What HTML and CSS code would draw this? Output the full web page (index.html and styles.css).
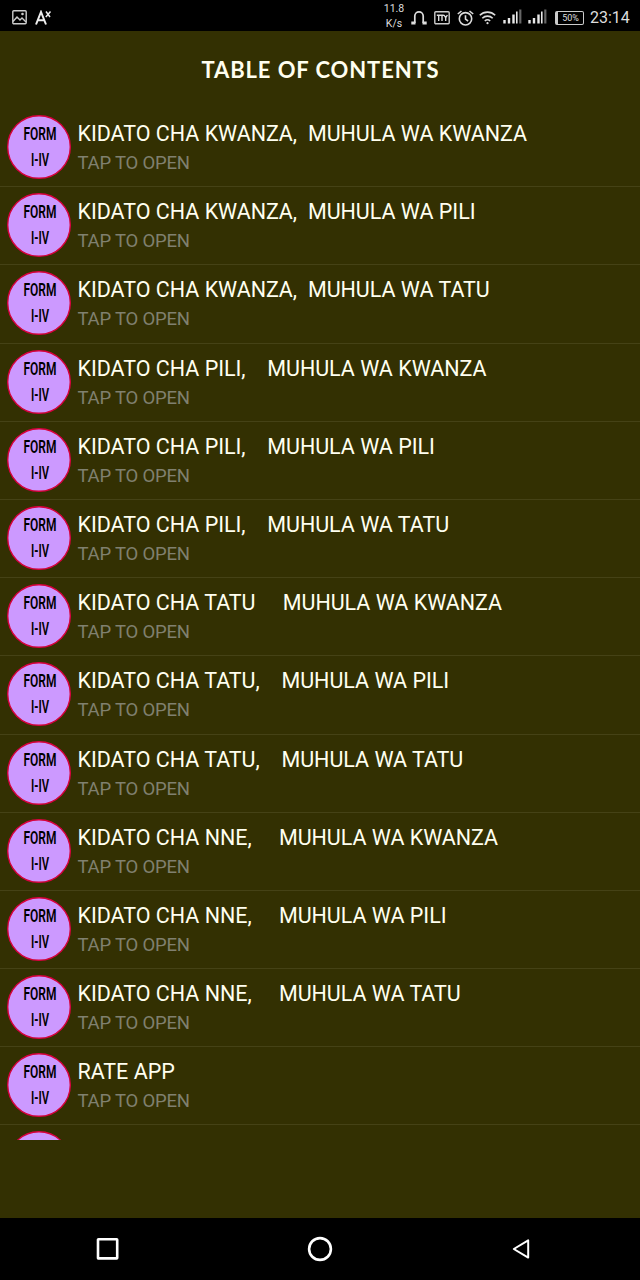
FILE: index.html
```
<!DOCTYPE html>
<html>
<head>
	<meta charset="utf-8">
	<title>Table of Contents</title>
	<link rel="stylesheet" href="styles.css">
</head>

<body>
	<svg width="0" height="0" class="defs">
		<symbol id="badge" viewBox="0 0 64 64">
			<circle cx="32" cy="32" r="31.3" fill="#cc99ff" stroke="#d8003c" stroke-width="1.4"/>
			<text x="16.5" y="24.5" textLength="33" lengthAdjust="spacingAndGlyphs">FORM</text>
			<text x="24" y="50.5" textLength="18" lengthAdjust="spacingAndGlyphs">I-IV</text>
		</symbol>
		<symbol id="signal" viewBox="0 0 19 15">
			<path d="M1.5 14.5v-3.5M6 14.5V9M10.5 14.5V5.5" stroke="#e8e8e8" stroke-width="2.4"/>
			<path d="M13.8 14.5V2.5" stroke="#e8e8e8" stroke-width="1.6"/>
			<path d="M17.3 14.5V0.5" stroke="#666" stroke-width="2.2"/>
		</symbol>
	</svg>

	<div class="status">
		<svg class="picture" width="15" height="15" viewBox="0 0 15 15" fill="none" stroke="#ccc" stroke-width="1.4">
			<rect x=".8" y=".8" width="13.4" height="13" rx="1"/>
			<path d="M1 11.5l4-4.5 3 3 2-2 4 4"/>
			<circle cx="10.5" cy="4" r=".6"/>
		</svg>
		<svg class="font-icon" width="17" height="16" viewBox="0 0 17 16" fill="none" stroke="#eee">
			<path d="M1 14.5L6 2l5 12.5M3 10.3h6" stroke-width="2"/>
			<path d="M11 1.5l4 5.5M15.5 1.5L10.8 7" stroke-width="1.5"/>
		</svg>
		<div class="speed">11.8<br>K/s</div>
		<svg class="headset" width="16" height="16" viewBox="0 0 16 16" fill="none" stroke="#ddd" stroke-width="1.7">
			<path d="M3.8 13V6a4.2 4.2 0 0 1 8.4 0v7"/>
			<path d="M.3 13h4.2M11.5 13h4.2" stroke-width="3"/>
		</svg>
		<svg class="tty" width="16" height="14" viewBox="0 0 16 14">
			<rect x=".8" y=".8" width="14.4" height="12" rx="1" fill="none" stroke="#ccc" stroke-width="1.4"/>
			<path d="M2.8 4.2h7M4.7 4v6M8 4v6M10 4l1.7 2.7L13.4 4M11.7 6.5V10" fill="none" stroke="#ddd" stroke-width="1.4"/>
		</svg>
		<svg class="alarm" width="17" height="16" viewBox="0 0 17 16" fill="none" stroke="#ddd" stroke-width="1.6">
			<circle cx="8.5" cy="8.8" r="6.2"/>
			<path d="M8.5 5.2v4l2.6 1.8M.8 4L4.5 1M16.2 4l-3.7-3"/>
		</svg>
		<svg class="wifi" width="17" height="14" viewBox="0 0 17 14" fill="none" stroke="#ddd" stroke-width="1.6">
			<path d="M.8 4.3a11 11 0 0 1 15.4 0M3.3 7.3a7.3 7.3 0 0 1 10.4 0M5.8 10a4 4 0 0 1 5.4 0"/>
			<circle cx="8.5" cy="12.2" r="1.1" fill="#ddd" stroke="none"/>
		</svg>
		<svg class="signal" width="19" height="15"><use href="#signal"/></svg>
		<svg class="signal second" width="19" height="15"><use href="#signal"/></svg>
		<div class="battery">50%</div>
		<span class="clock">23:14</span>
	</div>

	<h1>TABLE OF CONTENTS</h1>

	<ul class="list">
		<li>
			<svg class="badge"><use href="#badge"/></svg>
			<div><h2>KIDATO CHA KWANZA,  MUHULA WA KWANZA</h2><p>TAP TO OPEN</p></div>
		</li>
		<li>
			<svg class="badge"><use href="#badge"/></svg>
			<div><h2>KIDATO CHA KWANZA,  MUHULA WA PILI</h2><p>TAP TO OPEN</p></div>
		</li>
		<li>
			<svg class="badge"><use href="#badge"/></svg>
			<div><h2>KIDATO CHA KWANZA,  MUHULA WA TATU</h2><p>TAP TO OPEN</p></div>
		</li>
		<li>
			<svg class="badge"><use href="#badge"/></svg>
			<div><h2>KIDATO CHA PILI,    MUHULA WA KWANZA</h2><p>TAP TO OPEN</p></div>
		</li>
		<li>
			<svg class="badge"><use href="#badge"/></svg>
			<div><h2>KIDATO CHA PILI,    MUHULA WA PILI</h2><p>TAP TO OPEN</p></div>
		</li>
		<li>
			<svg class="badge"><use href="#badge"/></svg>
			<div><h2>KIDATO CHA PILI,    MUHULA WA TATU</h2><p>TAP TO OPEN</p></div>
		</li>
		<li>
			<svg class="badge"><use href="#badge"/></svg>
			<div><h2>KIDATO CHA TATU     MUHULA WA KWANZA</h2><p>TAP TO OPEN</p></div>
		</li>
		<li>
			<svg class="badge"><use href="#badge"/></svg>
			<div><h2>KIDATO CHA TATU,    MUHULA WA PILI</h2><p>TAP TO OPEN</p></div>
		</li>
		<li>
			<svg class="badge"><use href="#badge"/></svg>
			<div><h2>KIDATO CHA TATU,    MUHULA WA TATU</h2><p>TAP TO OPEN</p></div>
		</li>
		<li>
			<svg class="badge"><use href="#badge"/></svg>
			<div><h2>KIDATO CHA NNE,     MUHULA WA KWANZA</h2><p>TAP TO OPEN</p></div>
		</li>
		<li>
			<svg class="badge"><use href="#badge"/></svg>
			<div><h2>KIDATO CHA NNE,     MUHULA WA PILI</h2><p>TAP TO OPEN</p></div>
		</li>
		<li>
			<svg class="badge"><use href="#badge"/></svg>
			<div><h2>KIDATO CHA NNE,     MUHULA WA TATU</h2><p>TAP TO OPEN</p></div>
		</li>
		<li>
			<svg class="badge"><use href="#badge"/></svg>
			<div><h2>RATE APP</h2><p>TAP TO OPEN</p></div>
		</li>
		<li>
			<svg class="badge" viewBox="0 0 64 64"><circle cx="32" cy="32" r="31.3" fill="#cc99ff" stroke="#d8003c" stroke-width="1.4"/></svg>
		</li>
	</ul>

	<div class="nav">
		<svg width="24" height="24" viewBox="0 0 24 24"><rect x="3" y="2.2" width="19.2" height="19.2" rx=".5"/></svg>
		<svg width="26" height="26" viewBox="0 0 26 26"><circle cx="13" cy="13" r="10.9"/></svg>
		<svg class="back" width="20" height="22" viewBox="0 0 20 22"><path d="M17.2 2.4v17.2L2.8 11z"/></svg>
	</div>
</body>
</html>
```
FILE: styles.css
```
* {
	box-sizing:border-box;
}
body {
	margin:0;
	height:1280px;
	display:flex;
	flex-direction:column;
	overflow:hidden;
	background-color:#333002;
	color:#fffff0;
	font-family:Roboto, Arial, sans-serif;
}
.defs {
	position:absolute;
}
.status {
	height:31px;
	flex:none;
	display:flex;
	align-items:center;
	padding:4px 10px 0 12px;
	background-color:black;
	color:#ddd;
}
.status svg {
	flex:none;
}
.font-icon {
	margin-left:8px;
}
.speed {
	margin-left:auto;
	margin-top:-4px;
	width:22px;
	font-size:10.5px;
	line-height:15px;
	text-align:center;
}
.headset {
	margin-left:6px;
}
.tty {
	margin-left:7px;
}
.alarm {
	margin-left:7px;
}
.wifi {
	margin-left:5px;
}
.signal {
	margin-left:7px;
	margin-top:-3px;
}
.signal.second {
	margin-left:6px;
}
.battery {
	width:29px;
	height:14px;
	margin-left:8px;
	border:1.5px solid #ccc;
	border-left-width:3px;
	border-radius:2px;
	font-size:9px;
	line-height:12px;
	text-align:center;
}
.clock {
	width:40px;
	margin-left:6px;
	font-size:16px;
	line-height:20px;
}
h1 {
	height:78px;
	flex:none;
	margin:0;
	padding-left:1px;
	font:bold 22px/77px Lato, sans-serif;
	letter-spacing:.9px;
	text-align:center;
}
.list {
	height:1030.5px;
	flex:none;
	margin:0;
	padding:0;
	overflow:hidden;
	list-style:none;
}
.list li {
	height:78.2px;
	display:flex;
	padding:6px 6.5px 0;
	border-bottom:1px solid #454216;
}
.badge {
	width:64px;
	height:64px;
	flex:none;
	margin-right:7px;
	font:600 17.5px Roboto, sans-serif;
}
h2 {
	margin:6px 0 0;
	font-size:21.5px;
	letter-spacing:-.06px;
	word-spacing:.2px;
	line-height:26px;
	font-weight:normal;
	white-space:pre;
}
p {
	margin:5px 0 0;
	color:#80806f;
	font-size:18.5px;
	letter-spacing:-.2px;
	line-height:22px;
}
.nav {
	height:62px;
	margin-top:auto;
	display:grid;
	grid-template-columns:repeat(3, 1fr);
	align-items:center;
	justify-items:center;
	background-color:black;
}
.nav svg {
	fill:none;
	stroke:white;
	stroke-width:2.6;
	stroke-linejoin:round;
}
.nav .back {
	margin-right:24px;
	stroke-width:2;
}
```
